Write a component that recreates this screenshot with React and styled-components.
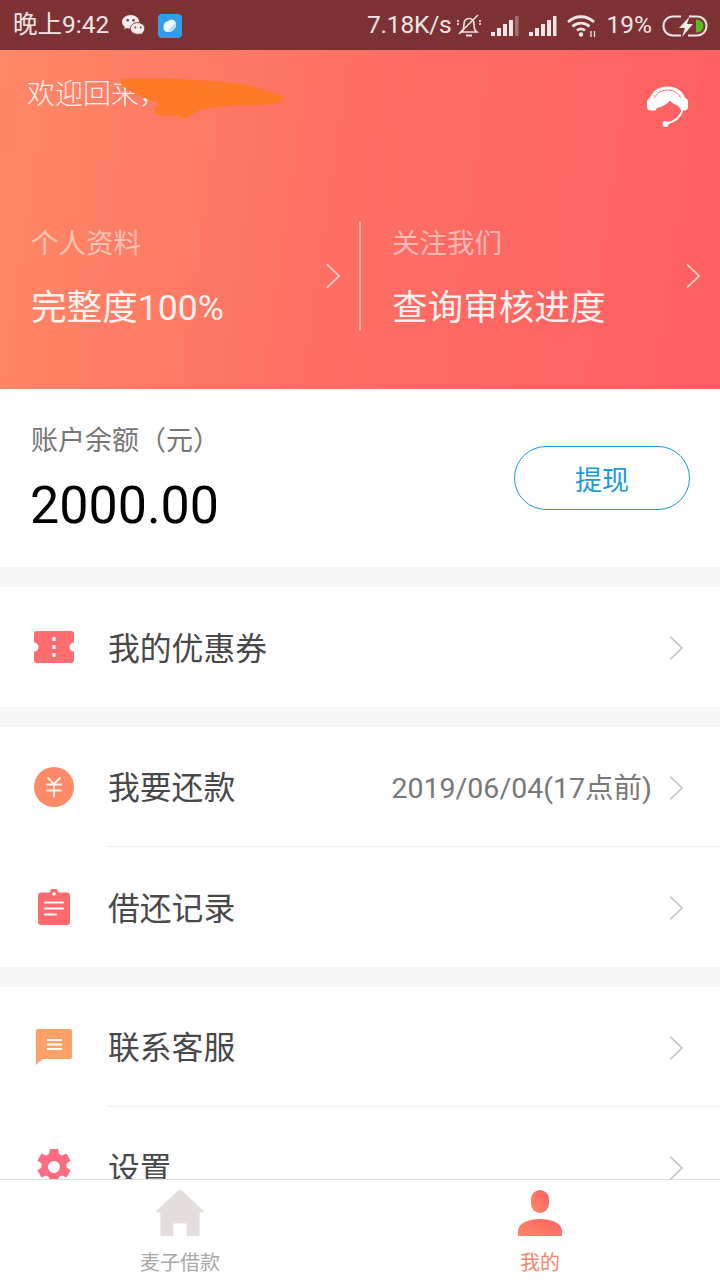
import React from 'react';
import styled, { createGlobalStyle } from 'styled-components';

const GlobalStyle = createGlobalStyle`
  html, body { margin: 0; padding: 0; background: #fff; }
  * { box-sizing: border-box; }
`;

const Page = styled.div`
  width: 720px;
  height: 1280px;
  display: flex;
  flex-direction: column;
  overflow: hidden;
  background: #f7f7f7;
  font-family: Roboto, "Noto Sans CJK SC", sans-serif;
`;

const StatusBar = styled.div`
  height: 50px;
  flex: none;
  display: flex;
  align-items: center;
  padding: 1px 12px 0 13px;
  background: #7c3232;
  color: #f1e6e6;
  font-size: 24.5px;
  line-height: 1;
`;
const StatusLeft = styled.div`
  display: flex;
  align-items: center;
  gap: 12px;
  flex: 1;
`;
const StatusRight = styled.div`
  display: flex;
  align-items: center;
  gap: 10px;
`;
const StatusText = styled.span`
  letter-spacing: ${(p) => p.$tight ? '-0.2px' : '0'};
  margin-right: ${(p) => p.$tight ? '-5px' : '0'};
`;

const Scroll = styled.div`
  flex: 1;
  min-height: 0;
  overflow: hidden;
`;

const Hero = styled.div`
  position: relative;
  height: 339px;
  padding: 25px 31px 0 27px;
  background: linear-gradient(98deg, #ff8866 0%, #ff6e64 50%, #ff5f62 100%);
  color: #fff;
`;
const HeroTop = styled.div`
  display: flex;
  justify-content: space-between;
  align-items: flex-start;
  height: 147px;
`;
const Greeting = styled.div`
  font-size: 28px;
  line-height: 40px;
  color: #fff1ec;
  font-weight: 300;
`;
const SupportIcon = styled.div`
  display: flex;
  margin: 11px 1px 0 0;
`;
const Scribble = styled.svg`
  position: absolute;
  left: 118px;
  top: 24px;
`;
const HeroCards = styled.div`
  display: grid;
  grid-template-columns: 332px 1fr;
  margin-right: -31px;
`;
const HeroCard = styled.div`
  height: 108px;
  display: flex;
  align-items: center;
  justify-content: space-between;
  padding: 0 ${(p) => p.$first ? '18px' : '19px'} 0 ${(p) => p.$first ? '4px' : '31px'};
  border-left: ${(p) => p.$first ? 'none' : '2px solid rgba(255,255,255,0.45)'};
`;
const CardText = styled.div`
  margin-top: 5px;
`;
const CardLabel = styled.div`
  font-size: 27.5px;
  line-height: 40px;
  color: rgba(255,255,255,0.55);
  font-weight: 400;
`;
const CardValue = styled.div`
  font-size: 35.6px;
  line-height: 50px;
  margin-top: 19px;
  color: rgba(255,255,255,0.92);
  font-weight: 400;
`;

const Balance = styled.div`
  height: 178px;
  display: flex;
  align-items: center;
  justify-content: space-between;
  padding: 0 30px;
  background: #fff;
  margin-bottom: 20px;
`;
const BalanceText = styled.div`
  padding-left: 1px;
`;
const BalanceLabel = styled.div`
  font-size: 27px;
  line-height: 40px;
  color: #757575;
  font-weight: 400;
`;
const BalanceValue = styled.div`
  font-size: 52px;
  line-height: 60px;
  margin-top: 15px;
  margin-left: -1px;
  color: #000;
`;
const Withdraw = styled.div`
  width: 176px;
  height: 64px;
  display: flex;
  align-items: center;
  justify-content: center;
  border: 1px solid #1c9ad6;
  border-radius: 32px;
  color: #1c9ad6;
  font-size: 27px;
`;

const Group = styled.div`
  background: #fff;
  margin-bottom: 20px;
`;
const Row = styled.div`
  height: 120px;
  display: flex;
  align-items: center;
  padding-left: 32px;
`;
const RowIcon = styled.div`
  width: 44px;
  height: 44px;
  flex: none;
  display: flex;
  align-items: center;
  justify-content: center;
  margin-right: 32px;
`;
const RowBody = styled.div`
  flex: 1;
  height: 100%;
  display: flex;
  align-items: center;
  padding-right: 36px;
  border-bottom: ${(p) => p.$line ? '1px solid #efefef' : 'none'};
`;
const RowTitle = styled.div`
  flex: 1;
  font-size: 31.8px;
  color: #484848;
  font-weight: 400;
  padding-bottom: 3px;
`;
const RowNote = styled.div`
  font-size: 28.5px;
  color: #777;
  margin-right: 16px;
  padding-bottom: 2px;
`;
const RowArrow = styled.div`
  display: flex;
  padding-top: 2px;
`;

const TabBar = styled.div`
  height: 101px;
  flex: none;
  display: grid;
  grid-template-columns: 1fr 1fr;
  background: #fff;
  border-top: 1px solid #dedcdc;
`;
const Tab = styled.div`
  display: flex;
  flex-direction: column;
  align-items: center;
  padding-top: 10px;
  color: ${(p) => p.$active ? '#f2866f' : '#a8a8a8'};
  font-size: 20px;
  line-height: 28px;
`;
const TabIcon = styled.svg`
  display: block;
  margin-bottom: 13px;
`;

const Chevron = ({ color = '#c4c4c4', size = 26 }) => (
  <svg width={size * 0.62} height={size} viewBox="0 0 16 26" fill="none">
    <path d="M2 1.5 14 13 2 24.5" stroke={color} strokeWidth="1.7" />
  </svg>
);

const Wechat = () => (
  <svg width="25" height="23" viewBox="0 0 26 24">
    <path d="M10 1C4.8 1 1 4.2 1 8.2c0 2.3 1.2 4.1 3 5.400L3.300 16l2.900-1.400c1.200.4 2.400.6 3.800.6C15 15.200 19 12 19 8.200 19 4.200 15 1 10 1Z" fill="#f6eeee" />
    <path d="M17.500 9C13 9 9.800 11.700 9.800 15.200s3.400 6 7.700 6c1 0 1.900-.1 2.800-.4l2.400 1.200-.6-2c1.600-1.100 2.700-2.800 2.700-4.800C24.800 11.700 21.800 9 17.500 9Z" fill="#f6eeee" stroke="#7c3232" strokeWidth="1" />
    <circle cx="7" cy="6.500" r="1.300" fill="#7c3232" />
    <circle cx="13" cy="6.500" r="1.300" fill="#7c3232" />
    <circle cx="15" cy="14" r="1" fill="#7c3232" />
    <circle cx="20.500" cy="14" r="1" fill="#7c3232" />
  </svg>
);

const BlueApp = () => (
  <svg width="24" height="24" viewBox="0 0 24 24">
    <rect width="24" height="24" rx="4" fill="#2f9ee8" />
    <path d="M7 8.500 12 6c3.500-1 6 1 6 4.500 0 2-.5 3.500-2 5-1.500 1.800-3.500 2.500-6 2.500-2.500 0-4.500-1.500-4.500-4 0-2.500.5-4.500 1.500-5.500Z" fill="#f2f9fd" />
    <path d="M17.500 9 9 17.500 15.500 16 18 12Z" fill="#bcdcf3" />
  </svg>
);

const BellOff = () => (
  <svg width="24" height="24" viewBox="0 0 24 24" fill="none" stroke="#f1e6e6" strokeWidth="1.600">
    <path d="M6 16c1-2 1-3.500 1-6 0-3 2-5.500 5-5.500s5 2.500 5 5.500c0 2.500 0 4 1 6l2 2H4l2-2Z" />
    <path d="M9 21.500h6" strokeWidth="2" />
    <path d="M2 20 21 1" />
    <path d="M1 6v5M23 6v5" strokeDasharray="2 1" />
  </svg>
);

const Signal = ({ dim }) => (
  <svg width="28" height="22" viewBox="0 0 28 22" fill="#f1e6e6">
    <rect x="0" y="17" width="4" height="4" />
    <rect x="6" y="13" width="4" height="8" />
    <rect x="12" y="9" width="4" height="12" />
    <rect x="18" y="5" width="4" height="16" />
    <rect x="24" y="1" width="3.500" height="20" opacity={dim ? 0.35 : 1} />
  </svg>
);

const Wifi = () => (
  <svg width="30" height="24" viewBox="0 0 30 24" fill="none" stroke="#f1e6e6" strokeWidth="2.800">
    <path d="M1 8C8.500 1 19.500 1 27 8" />
    <path d="M5.500 12.500c5-4.500 12-4.500 17 0" />
    <path d="M10 16.500c2.500-2 5.500-2 8 0" />
    <circle cx="14" cy="20.500" r="2.200" fill="#f1e6e6" stroke="none" />
    <path d="M24 17v6M27.500 17v6" strokeWidth="1.300" />
  </svg>
);

const Battery = () => (
  <svg width="46" height="22" viewBox="0 0 46 22" fill="none">
    <path d="M19 1.500H11C5.500 1.500 1.500 5.500 1.500 11s4 9.500 9.500 9.500h8M27 1.500h8c5.500 0 9.500 4 9.500 9.500s-4 9.500-9.500 9.500h-9" stroke="#f1e6e6" strokeWidth="2" />
    <path d="M34 4.500c4 0 7.500 2.500 7.500 6.500s-3.500 6.500-7.500 6.500Z" fill="#57bd1e" />
    <path d="M29 0 17 13h6l-3 9 11-13h-6l3-9Z" fill="#f6eeee" />
  </svg>
);

const Headset = () => (
  <svg width="41" height="42" viewBox="0 0 41 42" fill="#fff">
    <path d="M3 12C5 5 12 0.500 20.500 0.500S36 5 38 12c2 .5 3 2 3 4v5c0 2-1.500 3.500-3.500 3.500H34c-1.500-3.500-2.500-4.500-4.500-5.500-2.500-1-5-2-6.500-4.500-2.500 3.500-7 6-13 7.500L8.500 24.500H3.500C1.500 24.500 0 23 0 21v-5c0-2 1-3.500 3-4Z" />
    <path d="M7.500 12C9 7.500 14 4 20.500 4S32 7.500 33.500 12" fill="none" stroke="#ff6c64" strokeWidth="1" />
    <path d="M35.500 24C33.500 31.500 27 36 19 37.500" fill="none" stroke="#fff" strokeWidth="2" />
    <circle cx="18.500" cy="38" r="3" />
  </svg>
);

const Ticket = () => (
  <svg width="40" height="32" viewBox="0 0 40 32">
    <path d="M3 0h34a3 3 0 0 1 3 3v8.500a4.500 4.500 0 0 0 0 9V29a3 3 0 0 1-3 3H3a3 3 0 0 1-3-3v-8.500a4.500 4.500 0 0 0 0-9V3a3 3 0 0 1 3-3Z" fill="#ff6d70" />
    <path d="M18.500 6h3v4h-3zM18.500 14h3v4h-3zM18.500 22h3v4h-3z" fill="#fff" />
  </svg>
);

const Yuan = () => (
  <svg width="40" height="40" viewBox="0 0 40 40">
    <circle cx="20" cy="20" r="20" fill="#ff8a68" />
    <path d="M13.500 10.500l6.500 6.500 6.500-6.500M12 17.500h16M12.500 23.500h15M20 17v13.500" fill="none" stroke="#fff3ec" strokeWidth="1.800" />
  </svg>
);

const Clipboard = () => (
  <svg width="32" height="36" viewBox="0 0 32 36">
    <path d="M3 3.500h9a4 4 0 0 1 8 0h9a3 3 0 0 1 3 3V33a3 3 0 0 1-3 3H3a3 3 0 0 1-3-3V6.500a3 3 0 0 1 3-3Z" fill="#ff6a6e" />
    <circle cx="16" cy="5" r="1.800" fill="#fff" />
    <path d="M7 13.500h18M7 19.500h18M7 25.500h11" stroke="#fff" strokeWidth="2" strokeLinecap="round" />
  </svg>
);

const Chat = () => (
  <svg width="36" height="36" viewBox="0 0 36 36">
    <path d="M2 0h32a2 2 0 0 1 2 2v26a2 2 0 0 1-2 2H6l-6 6V2a2 2 0 0 1 2-2Z" fill="#ffa066" />
    <path d="M11 11h15M11 15.500h15M11 20h15" stroke="#fff" strokeWidth="2" />
  </svg>
);

const Gear = () => (
  <svg width="38" height="38" viewBox="0 0 38 38">
    <path fillRule="evenodd" fill="#ff6b80" d="M15 1h8l1 5 3 1.500 4.500-2 4 7-4 3v4l4 3-4 7-4.500-2-3 1.500-1 5h-8l-1-5-3-1.500-4.500 2-4-7 4-3v-4l-4-3 4-7 4.500 2L14 6l1-5Zm4 12a6 6 0 1 0 0 12 6 6 0 0 0 0-12Z" />
  </svg>
);

const MenuRow = ({ icon, title, note, line }) => (
  <Row>
    <RowIcon>{icon}</RowIcon>
    <RowBody $line={line}>
      <RowTitle>{title}</RowTitle>
      {note && <RowNote>{note}</RowNote>}
      <RowArrow><Chevron /></RowArrow>
    </RowBody>
  </Row>
);

const App = () => {
  return (
    <Page>
      <GlobalStyle />
      <StatusBar>
        <StatusLeft>
          <StatusText>晚上9:42</StatusText>
          <Wechat />
          <BlueApp />
        </StatusLeft>
        <StatusRight>
          <StatusText $tight>7.18K/s</StatusText>
          <BellOff />
          <Signal dim />
          <Signal />
          <Wifi />
          <StatusText>19%</StatusText>
          <Battery />
        </StatusRight>
      </StatusBar>
      <Scroll>
        <Hero>
          <HeroTop>
            <Greeting>欢迎回来，</Greeting>
            <SupportIcon><Headset /></SupportIcon>
          </HeroTop>
          <Scribble width="170" height="48" viewBox="0 0 170 48">
            <path d="M3 5C30 3 80 6 109 8C130 10 150 16 162 21C167 23 166 27 161 29C150 32 130 31 112 32C100 33 90 34 82 36C76 38 74 42 69 44C66 46 62 42 58 41C50 43 40 42 36 38C35 34 38 32 42 30C32 26 20 22 14 18C8 14 -1 10 3 5Z" fill="#ff7a28" />
          </Scribble>
          <HeroCards>
            <HeroCard $first>
              <CardText>
                <CardLabel>个人资料</CardLabel>
                <CardValue>完整度100%</CardValue>
              </CardText>
              <Chevron color="#ffd9cf" />
            </HeroCard>
            <HeroCard>
              <CardText>
                <CardLabel>关注我们</CardLabel>
                <CardValue>查询审核进度</CardValue>
              </CardText>
              <Chevron color="#ffd9cf" />
            </HeroCard>
          </HeroCards>
        </Hero>
        <Balance>
          <BalanceText>
            <BalanceLabel>账户余额（元）</BalanceLabel>
            <BalanceValue>2000.00</BalanceValue>
          </BalanceText>
          <Withdraw>提现</Withdraw>
        </Balance>
        <Group>
          <MenuRow icon={<Ticket />} title="我的优惠券" />
        </Group>
        <Group>
          <MenuRow icon={<Yuan />} title="我要还款" note="2019/06/04(17点前)" line />
          <MenuRow icon={<Clipboard />} title="借还记录" />
        </Group>
        <Group>
          <MenuRow icon={<Chat />} title="联系客服" line />
          <MenuRow icon={<Gear />} title="设置" />
        </Group>
      </Scroll>
      <TabBar>
        <Tab>
          <TabIcon width="48" height="46" viewBox="0 0 50 48">
            <path d="M25 0c1 0 2 .5 3 1.500L49 21c1 1 .5 2.500-1 2.500h-2.500V46a2 2 0 0 1-2 2H32V35H18v13H6.500a2 2 0 0 1-2-2V23.500H2C.5 23.500 0 22 1 21L22 1.500C23 .5 24 0 25 0Z" fill="#e3dddc" />
          </TabIcon>
          麦子借款
        </Tab>
        <Tab $active>
          <TabIcon width="44" height="46" viewBox="0 0 44 46">
            <defs>
              <linearGradient id="me" x1="0" x2="1" y1="1" y2="0">
                <stop offset="0" stopColor="#ff8a68" />
                <stop offset="1" stopColor="#ff5f62" />
              </linearGradient>
            </defs>
            <rect x="13" y="0" width="18" height="23" rx="9" fill="url(#me)" />
            <path d="M0 46V41C0 33 11 29 22 29s22 4 22 12v5Z" fill="url(#me)" />
          </TabIcon>
          我的
        </Tab>
      </TabBar>
    </Page>
  );
};

export default App;
